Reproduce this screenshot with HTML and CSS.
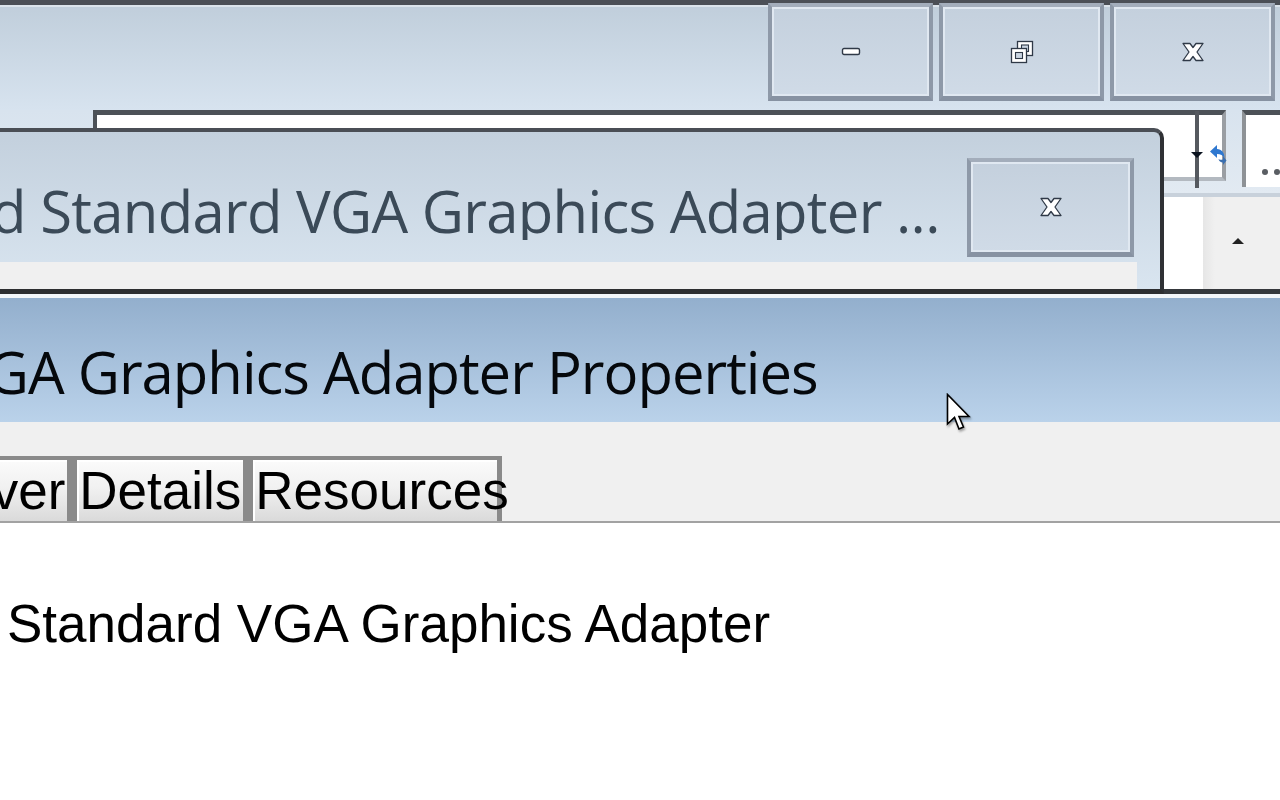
FILE: index.html
```html
<!DOCTYPE html>
<html lang="en">
<head>
<meta charset="utf-8">
<title>Standard VGA Graphics Adapter Properties</title>
<link rel="stylesheet" href="styles.css">
</head>
<body>
<div class="desk">
  <div class="win-back">
    <div class="back-title">
      <div class="caption">
        <div class="cap">
          <svg width="20" height="10" viewBox="0 0 20 10"><rect x="1.5" y="1.5" width="17" height="6" rx="1.5" fill="#fff" stroke="#2f3947" stroke-width="1.4"/></svg>
        </div>
        <div class="cap">
          <svg width="24" height="24" viewBox="0 0 24 24">
            <rect x="7.5" y="1.5" width="15" height="14" fill="#fff" stroke="#2f3947" stroke-width="1.3"/>
            <rect x="11.5" y="5" width="7" height="6.5" fill="#c9d4e1" stroke="#2f3947" stroke-width="1.1"/>
            <rect x="1.5" y="8.5" width="15" height="14" fill="#fff" stroke="#2f3947" stroke-width="1.3"/>
            <rect x="5.5" y="12.5" width="7" height="6" fill="#c9d4e1" stroke="#2f3947" stroke-width="1.1"/>
          </svg>
        </div>
        <div class="cap">
          <svg width="22" height="20" viewBox="0 0 22 20"><polygon points="1,1.5 8,1.5 11,5.5 14,1.5 21,1.5 15,10 21,18.5 14,18.5 11,14.5 8,18.5 1,18.5 7,10" fill="#fff" stroke="#2f3947" stroke-width="1.3" stroke-linejoin="round"/></svg>
        </div>
      </div>
    </div>
    <div class="back-toolbar">
      <div class="address">
        <span class="addr-sep"></span>
        <span class="addr-drop"></span>
        <svg class="refresh" width="20" height="24" viewBox="0 0 20 24">
          <path d="M9 2 L2 8.5 L9 15 L9 11 C12.5 11 15 12.5 16.5 15 C16.5 9.5 13.5 6 9 6 Z" fill="#2f78d0"/>
          <path d="M15 13 L18.5 17.5 L15 22 L15 19.5 C12.5 19.5 11 18 10.5 16 C12 17 13.5 17 15 16.5 Z" fill="#3a6fb0"/>
        </svg>
      </div>
      <div class="search">
        <span class="dot"></span><span class="dot"></span>
      </div>
    </div>
    <div class="back-body">
      <div class="back-list"></div>
      <div class="back-scroll"><span class="up-arrow"></span></div>
    </div>
  </div>

  <div class="win-mid">
    <div class="mid-title">
      <div class="mid-text"><span class="mid-inner">d Standard VGA Graphics Adapter ...</span></div>
      <div class="cap mid-close">
        <svg width="22" height="20" viewBox="0 0 22 20"><polygon points="1,1.5 8,1.5 11,5.5 14,1.5 21,1.5 15,10 21,18.5 14,18.5 11,14.5 8,18.5 1,18.5 7,10" fill="#fff" stroke="#2f3947" stroke-width="1.3" stroke-linejoin="round"/></svg>
      </div>
    </div>
    <div class="mid-client"></div>
  </div>
</div>

<div class="win-front">
  <div class="front-title"><span class="front-inner">Standard VGA Graphics Adapter Properties</span></div>
  <div class="tabstrip">
    <div class="tab tab-first">Driver</div>
    <div class="tab">Details</div>
    <div class="tab tab-res">Resources</div>
  </div>
  <div class="front-body">
    <p class="device-name">Standard VGA Graphics Adapter</p>
  </div>
</div>

<svg class="cursor" width="26" height="40" viewBox="0 0 26 40">
  <path d="M1.5 1.5 L1.5 31 L8.5 24.5 L13 36 L17.5 34 L13 23.5 L23 23.5 Z" fill="#fff" stroke="#000" stroke-width="1.6" stroke-linejoin="miter"/>
</svg>
</body>
</html>
```

FILE: styles.css
```css
* { box-sizing: border-box; margin: 0; padding: 0; }

html, body {
  width: 1280px;
  height: 800px;
  overflow: hidden;
  background: #ffffff;
}

body {
  position: relative;
  font-family: "Liberation Sans", Arial, sans-serif;
}

/* ---------- back window ---------- */
.desk {
  position: relative;
  height: 294px;
}

.win-back {
  height: 294px;
  display: flex;
  flex-direction: column;
  background: #dde6ef;
  border-bottom: 5px solid #35383c;
}

.back-title {
  height: 110px;
  flex: none;
  border-top: 5px solid #4b4f56;
  background: linear-gradient(#c0cedb, #d7e3ef);
  box-shadow: inset 0 2px 0 #dbe3eb;
  display: flex;
  justify-content: flex-end;
}

.caption {
  display: flex;
  gap: 6px;
  margin: -2px 5px 0 0;
  height: 98px;
}

.cap {
  width: 165px;
  height: 98px;
  border: 4px solid #8e99a8;
  border-top-color: #a3adbb;
  border-bottom: 5px solid #8792a2;
  background: linear-gradient(#c4d0dd, #d0dbe7);
  box-shadow: inset 0 0 0 2px #e0e8f1;
  display: flex;
  align-items: center;
  justify-content: center;
}

.back-toolbar {
  height: 83px;
  flex: none;
  display: flex;
  align-items: flex-start;
  background: linear-gradient(#d8e3ee, #e2eaf2);
}

.address {
  position: relative;
  margin-left: 93px;
  width: 1137px;
  height: 71px;
  background: #ffffff;
  border-top: 5px solid #4c5157;
  border-left: 4px solid #4c5157;
  border-right: 4px solid #9a9ea3;
  border-bottom: 4px solid #b3b9c0;
}

.addr-sep {
  position: absolute;
  left: 1098px;
  top: -4px;
  width: 4px;
  height: 77px;
  background: #55595f;
}

.addr-drop {
  position: absolute;
  left: 1094px;
  top: 37px;
  width: 0;
  height: 0;
  border-left: 6px solid transparent;
  border-right: 6px solid transparent;
  border-top: 6px solid #0c1420;
}

.refresh {
  position: absolute;
  left: 1111px;
  top: 28px;
}

.search {
  position: relative;
  margin-left: 16px;
  flex: 1;
  height: 77px;
  background: #ffffff;
  border-top: 5px solid #4c5157;
  border-left: 4px solid #8e9296;
  display: flex;
  align-items: flex-end;
  gap: 6px;
  padding: 0 0 12px 16px;
}

.dot {
  width: 6px;
  height: 6px;
  border-radius: 50%;
  background: #5a5e63;
}

.back-body {
  flex: 1;
  display: flex;
  border-top: 4px solid #c8d1db;
  background: #ffffff;
}

.back-list {
  flex: 1;
}

.back-scroll {
  position: relative;
  width: 77px;
  background: linear-gradient(90deg, #e6e6e6, #f0f0f0 12px);
}

.up-arrow {
  position: absolute;
  left: 29px;
  top: 41px;
  width: 0;
  height: 0;
  border-left: 6px solid transparent;
  border-right: 6px solid transparent;
  border-bottom: 6px solid #222;
}

/* ---------- middle window (dialog) ---------- */
.win-mid {
  position: absolute;
  left: 0;
  top: 128px;
  width: 1164px;
  height: 166px;
  border-top: 4px solid #4a4e55;
  border-right: 4px solid #2f3135;
  border-bottom: 5px solid #2d2e30;
  border-top-right-radius: 10px;
  background: linear-gradient(#c3d0dd, #d9e5f0);
  display: flex;
  flex-direction: column;
  overflow: hidden;
}

.mid-title {
  height: 130px;
  flex: none;
  display: flex;
  align-items: flex-start;
}

.mid-text {
  flex: 1;
  overflow: hidden;
  white-space: nowrap;
  padding-top: 50px;
  font-family: "Open Sans", "Noto Sans", sans-serif;
  font-size: 58px;
  line-height: 58px;
  letter-spacing: -0.7px;
  color: #3b4a58;
}

.mid-inner {
  display: inline-block;
  margin-left: -9px;
}

.mid-close {
  width: 167px;
  height: 99px;
  margin: 26px 26px 0 30px;
}

.mid-client {
  flex: 1;
  margin-right: 23px;
  background: #f0f0f0;
}

/* ---------- front window ---------- */
.win-front {
  border-top: 4px solid #f3f6f9;
}

.front-title {
  height: 124px;
  overflow: hidden;
  white-space: nowrap;
  padding-top: 45px;
  background: linear-gradient(#93afcd, #bad2ea);
  font-family: "Open Sans", "Noto Sans", sans-serif;
  font-size: 58px;
  line-height: 58px;
  letter-spacing: -1px;
  color: #05080c;
}

.front-inner {
  display: inline-block;
  margin-left: -300px;
}

.tabstrip {
  display: flex;
  align-items: flex-end;
  overflow: hidden;
  height: 101px;
  padding-top: 34px;
  background: #f0f0f0;
  border-bottom: 2px solid #a2a2a2;
}

.tab {
  flex: none;
  height: 65px;
  padding: 0 2px;
  border: 5px solid #8a8a8a;
  border-top-width: 4px;
  border-bottom: 0;
  background: linear-gradient(#fbfbfb, #f1f1f1 45%, #dadada);
  box-shadow: inset 2px 2px 0 #ffffff;
  font-size: 53px;
  line-height: 61px;
  color: #000;
  white-space: nowrap;
}

.tab-first {
  margin-left: -83px;
}

.tab-res {
  width: 254px;
}

.front-body {
  height: 277px;
  background: #ffffff;
  padding: 70px 0 0 7px;
}

.device-name {
  font-size: 53px;
  color: #000;
  white-space: nowrap;
}

/* ---------- mouse pointer ---------- */
.cursor {
  position: absolute;
  left: 946px;
  top: 393px;
  filter: drop-shadow(1px 2px 1px rgba(0,0,0,0.35));
}
```
